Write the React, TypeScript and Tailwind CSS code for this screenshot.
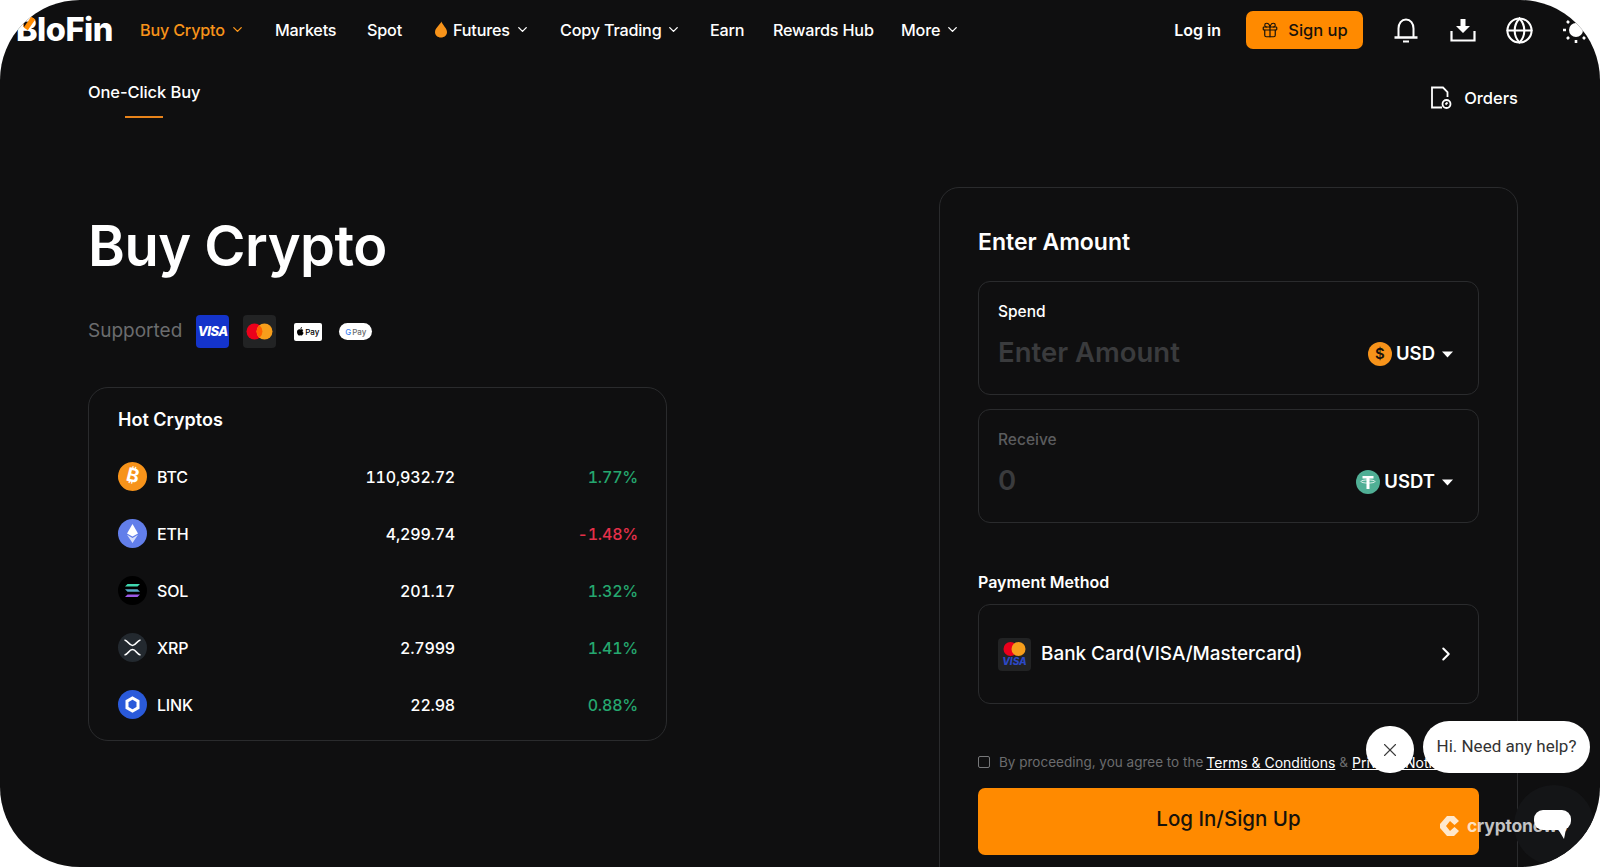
import { ChevronDown, ChevronRight, Gift, Globe, X } from 'lucide-react';

const navItems = [
  { label: 'Buy Crypto', caret: true, active: true, width: 'w-[135px]' },
  { label: 'Markets', width: 'w-[92px]' },
  { label: 'Spot', width: 'w-[67px]' },
  { label: 'Futures', caret: true, flame: true, width: 'w-[126px]' },
  { label: 'Copy Trading', caret: true, width: 'w-[150px]' },
  { label: 'Earn', width: 'w-[63px]' },
  { label: 'Rewards Hub', width: 'w-[128px]' },
  { label: 'More', caret: true, width: 'w-[70px]' },
];

const hotCryptos = [
  { symbol: 'BTC', price: '110,932.72', change: '1.77%', up: true },
  { symbol: 'ETH', price: '4,299.74', change: '-1.48%', up: false },
  { symbol: 'SOL', price: '201.17', change: '1.32%', up: true },
  { symbol: 'XRP', price: '2.7999', change: '1.41%', up: true },
  { symbol: 'LINK', price: '22.98', change: '0.88%', up: true },
];

function Flame() {
  return (
    <svg width="14" height="17" viewBox="0 0 14 17" className="mr-[5px]">
      <path d="M7.5 0.5C8 3.5 13 7 13 11C13 14.3 10.3 16.5 7 16.5C3.7 16.5 1 14.3 1 11C1 8 3 6.5 4.5 4.5C5.5 3 7 2 7.5 0.5Z" fill="#f7931a" />
    </svg>
  );
}

function CoinIcon({ symbol }: { symbol: string }) {
  if (symbol === 'BTC') {
    return (
      <div className="flex h-[29px] w-[29px] rotate-[14deg] items-center justify-center rounded-full bg-[#f7931a] text-[19px] font-bold text-white">
        ₿
      </div>
    );
  }
  if (symbol === 'ETH') {
    return (
      <svg width="29" height="29" viewBox="0 0 29 29">
        <circle cx="14.5" cy="14.5" r="14.5" fill="#627eea" />
        <path d="M14.5 5L9 14.5L14.5 17.6L20 14.5Z" fill="#fff" />
        <path d="M9 15.8L14.5 24L20 15.8L14.5 19Z" fill="#fff" fillOpacity="0.75" />
      </svg>
    );
  }
  if (symbol === 'SOL') {
    return (
      <svg width="29" height="29" viewBox="0 0 29 29">
        <circle cx="14.5" cy="14.5" r="14.5" fill="#000" />
        <path d="M9.5 8H22L19.5 10.6H7Z" fill="#3fd8b0" />
        <path d="M7 13.2H19.5L22 15.8H9.5Z" fill="#5aa9c9" />
        <path d="M9.5 18.4H22L19.5 21H7Z" fill="#9b59e6" />
      </svg>
    );
  }
  if (symbol === 'XRP') {
    return (
      <svg width="29" height="29" viewBox="0 0 29 29">
        <circle cx="14.5" cy="14.5" r="14.5" fill="#23292f" />
        <path d="M6.5 7C10 7.5 11 12.5 14.5 12.5C18 12.5 19 7.5 22.5 7M6.5 22C10 21.5 11 16.5 14.5 16.5C18 16.5 19 21.5 22.5 22" stroke="#fff" strokeWidth="1.7" fill="none" />
      </svg>
    );
  }
  return (
    <svg width="29" height="29" viewBox="0 0 29 29">
      <circle cx="14.5" cy="14.5" r="14.5" fill="#2a5ada" />
      <path d="M14.5 8L20 11.2V17.8L14.5 21L9 17.8V11.2Z" fill="none" stroke="#fff" strokeWidth="3" />
    </svg>
  );
}

function Caret() {
  return (
    <svg width="11" height="7" viewBox="0 0 11 7">
      <path d="M0 0.5H11L5.5 6.5Z" fill="#fff" />
    </svg>
  );
}

function AmountBox({ label, value, labelColor, coin, icon }: { label: string; value: string; labelColor: string; coin: string; icon: React.ReactNode }) {
  return (
    <div className="h-[114px] rounded-[12px] border border-[#2a2b2d] px-[19px] pt-[19px]">
      <div className={`text-[15.5px] font-medium leading-[22px] ${labelColor}`}>{label}</div>
      <div className="mt-[11px] flex items-center justify-between pr-[6px]">
        <span className="text-[27.5px] font-semibold leading-[36px] text-[#3a3b3d]">{value}</span>
        <div className="mt-[4px] flex items-center">
          {icon}
          <span className="ml-[4px] text-[18.5px] font-semibold text-white">{coin}</span>
          <span className="ml-[7px]"><Caret /></span>
        </div>
      </div>
    </div>
  );
}

export default function App() {
  return (
    <div className="h-[867px] w-[1600px] overflow-hidden bg-white font-[Inter,sans-serif]">
      <div className="relative h-[867px] w-[1600px] overflow-hidden rounded-[80px] bg-[#0f0f10] text-white">
        {/* Top nav */}
        <header className="flex h-[60px] items-center pl-[16px] pr-[10px]">
          <div className="relative mr-[27px] w-[97px] text-[32.5px] font-extrabold tracking-[-0.5px]">
            BloFin
            <span className="absolute left-[11px] top-[11px] h-[13px] w-[5px] rotate-[35deg] bg-[#ff8a00]" />
          </div>
          <nav className="flex items-center">
            {navItems.map((item) => (
              <div key={item.label} className={`flex items-center text-[16.2px] font-medium tracking-[-0.2px] ${item.width} ${item.active ? 'text-[#f7931a]' : 'text-white'}`}>
                {item.flame && <Flame />}
                <span>{item.label}</span>
                {item.caret && <ChevronDown size={15} strokeWidth={2.2} className="ml-[5px]" />}
              </div>
            ))}
          </nav>
          <div className="ml-auto flex items-center">
            <span className="mr-[25px] text-[16px] font-semibold">Log in</span>
            <button className="mr-[30px] flex h-[38px] w-[117px] items-center justify-center gap-[9px] rounded-[7px] bg-[#ff8a00] text-[16.5px] font-medium text-[#17120b]">
              <Gift size={18} strokeWidth={1.6} />
              Sign up
            </button>
            <svg width="26" height="26" viewBox="0 0 26 26" fill="none" stroke="#fff" strokeWidth="2">
              <path d="M5.5 20V11.5C5.5 6.5 8.5 2.5 13 2.5C17.5 2.5 20.5 6.5 20.5 11.5V20" />
              <path d="M1.5 20.5H24.5" strokeWidth="2.4" />
              <path d="M10 24.5H16" />
            </svg>
            <svg width="26" height="26" viewBox="0 0 26 26" fill="none" className="ml-[31px]">
              <path d="M1.5 14V23.5H24.5V14" stroke="#fff" strokeWidth="2.2" />
              <path d="M10.5 2H15.5V9H20L13 16L6 9H10.5Z" fill="#fff" />
            </svg>
            <Globe size={29} strokeWidth={1.7} className="ml-[29px]" />
            <svg width="28" height="28" viewBox="0 0 28 28" fill="#fff" stroke="#fff" strokeWidth="2.6" className="ml-[28px]">
              <circle cx="14" cy="14" r="7" stroke="none" />
              <path d="M14 1V4M14 24V27M1 14H4M24 14H27M5 5L7 7M21 21L23 23M5 23L7 21M21 7L23 5" />
            </svg>
          </div>
        </header>

        <main className="pl-[88px] pr-[82px]">
          {/* Tab row */}
          <div className="flex items-start justify-between">
            <div className="flex flex-col items-center">
              <div className="mt-[20px] text-[16.5px] font-medium leading-[24px] tracking-[-0.1px]">One-Click Buy</div>
              <div className="mt-[12px] h-[2px] w-[38px] bg-[#e8831a]" />
            </div>
            <div className="mt-[26px] flex items-center gap-[12px]">
              <svg width="22" height="24" viewBox="0 0 22 24" fill="none" stroke="#fff" strokeWidth="1.8">
                <path d="M12 21.5H2V1.5H13L17.5 6V11" />
                <circle cx="16.5" cy="18" r="4" />
                <path d="M15.5 18.5L17.5 16.5" />
              </svg>
              <span className="text-[16.5px] font-medium">Orders</span>
            </div>
          </div>

          <div className="mt-[69px] flex justify-between">
            {/* Left column */}
            <section className="w-[579px]">
              <h1 className="mt-[27px] text-[56px] font-semibold leading-[64px] tracking-[-0.5px]">Buy Crypto</h1>
              <div className="mt-[37px] flex h-[33px] items-center">
                <span className="mr-[14px] text-[19px] text-[#6b6c6e]">Supported</span>
                <div className="mr-[14px] flex h-[33px] w-[33px] items-center justify-center rounded-[4px] bg-[#1434cb] text-[13px] font-extrabold italic tracking-[-0.5px]">VISA</div>
                <div className="mr-[18px] flex h-[33px] w-[33px] items-center justify-center rounded-[4px] bg-[#222324]">
                  <svg width="27" height="17" viewBox="0 0 27 17">
                    <circle cx="8.5" cy="8.5" r="8" fill="#eb001b" />
                    <circle cx="18.5" cy="8.5" r="8" fill="#f79e1b" />
                    <path d="M13.5 2.3A8 8 0 0 1 13.5 14.7A8 8 0 0 1 13.5 2.3Z" fill="#ff5f00" />
                  </svg>
                </div>
                <div className="mr-[17px] flex h-[18px] w-[28px] items-center justify-center rounded-[2px] bg-white text-[8px] font-medium text-black">
                  <svg width="7" height="9" viewBox="0 0 7 9" className="mr-[1px]">
                    <path d="M3.5 2.5C4.2 2.1 5.4 1.9 6.3 3C5.2 3.7 5.4 5.3 6.6 5.8C6.2 7 5.4 8.5 4.5 8.5C4 8.5 3.8 8.2 3.3 8.2C2.8 8.2 2.5 8.5 2 8.5C1 8.5 0 6.5 0 5C0 3 1.8 1.8 3.5 2.5ZM3.4 2C3.3 1 4.1 0.1 5 0C5.1 1 4.3 2 3.4 2Z" fill="#000" />
                  </svg>
                  Pay
                </div>
                <div className="flex h-[17px] w-[33px] items-center justify-center rounded-full bg-white text-[8px] font-medium text-[#6b6c6e]">
                  <span className="mr-[1px] text-[#4285f4]">G</span>Pay
                </div>
              </div>

              <div className="mt-[39px] h-[354px] rounded-[20px] border border-[#2a2b2d] pl-[29px] pr-[28px] pt-[20px]">
                <div className="text-[18px] font-semibold leading-[24px]">Hot Cryptos</div>
                <div className="mt-[16px]">
                  {hotCryptos.map((coin) => (
                    <div key={coin.symbol} className="flex h-[57px] items-center text-[16px] font-medium tracking-[-0.2px] tabular-nums">
                      <CoinIcon symbol={coin.symbol} />
                      <span className="ml-[10px] w-[80px]">{coin.symbol}</span>
                      <span className="w-[218px] text-right">{coin.price}</span>
                      <span className={`flex-1 text-right ${coin.up ? 'text-[#25a76f]' : 'text-[#e5304a]'}`}>{coin.change}</span>
                    </div>
                  ))}
                </div>
              </div>
            </section>

            {/* Right card */}
            <section className="h-[720px] w-[579px] rounded-[20px] border border-[#2a2b2d] px-[38px] pt-[36px]">
              <h2 className="text-[23px] font-semibold leading-[36px]">Enter Amount</h2>
              <div className="mt-[21px] flex flex-col gap-[14px]">
                <AmountBox
                  label="Spend"
                  labelColor="text-white"
                  value="Enter Amount"
                  coin="USD"
                  icon={
                    <div className="flex h-[24px] w-[24px] items-center justify-center rounded-full bg-[#f7931a] text-[15px] font-semibold text-[#17120b]">$</div>
                  }
                />
                <AmountBox
                  label="Receive"
                  labelColor="text-[#5b5c5e]"
                  value="0"
                  coin="USDT"
                  icon={
                    <svg width="24" height="24" viewBox="0 0 24 24">
                      <circle cx="12" cy="12" r="12" fill="#50af95" />
                      <path d="M6.5 6H17.5V8.5H13.5V19H10.5V8.5H6.5Z" fill="#fff" />
                      <ellipse cx="12" cy="11.5" rx="7" ry="1.6" fill="none" stroke="#fff" strokeWidth="0.8" />
                    </svg>
                  }
                />
              </div>

              <div className="mt-[47px] text-[16px] font-semibold leading-[24px]">Payment Method</div>
              <div className="mt-[10px] flex h-[100px] items-center rounded-[12px] border border-[#2a2b2d] pl-[19px] pr-[21px]">
                <div className="flex h-[33px] w-[33px] flex-col items-center justify-center rounded-[4px] bg-[#222324]">
                  <svg width="23" height="14" viewBox="0 0 23 14">
                    <circle cx="7.5" cy="7" r="7" fill="#eb001b" />
                    <circle cx="15.5" cy="7" r="7" fill="#f79e1b" />
                  </svg>
                  <span className="text-[10px] font-extrabold italic leading-[11px] text-[#2c49c7]">VISA</span>
                </div>
                <span className="ml-[10px] text-[18.9px] font-medium">Bank Card(VISA/Mastercard)</span>
                <ChevronRight size={22} strokeWidth={2.2} className="ml-auto" />
              </div>

              <div className="mt-[50px] flex h-[16px] items-center text-[13.5px] text-[#6b6c6e]">
                <span className="h-[12px] w-[12px] rounded-[2px] border border-[#77787a]" />
                <span className="ml-[9px]">By proceeding, you agree to the </span>
                <span className="ml-[3px] text-[14px] text-white underline">Terms &amp; Conditions</span>
                <span className="mx-[4px]">&amp;</span>
                <span className="text-[14px] text-white underline">Privacy Notice</span>
              </div>
              <button className="mt-[18px] h-[67px] w-full rounded-[7px] bg-[#ff8a00] pb-[4px] text-[20.5px] font-medium text-[#17120b]">Log In/Sign Up</button>
            </section>
          </div>
        </main>

        {/* Chat widget + watermark */}
        <div className="absolute left-[1514px] top-[785px] h-[80px] w-[80px] rounded-full bg-[#141517]" />
        <div className="absolute left-[1440px] top-[813px] flex items-center gap-[8px] text-[17.5px] font-bold tracking-[-0.2px] text-white/75">
          <svg width="19" height="20" viewBox="0 0 19 20">
            <path d="M7 0H14L19 5L14.5 9L10 5L6 10L10 15L14.5 11L19 15L14 20H7L0 12V8Z" fill="#fff" fillOpacity="0.8" />
          </svg>
          cryptonews
        </div>
        <div className="absolute left-[1534px] top-[810px] h-[20px] w-[37px] rounded-[9px] bg-white" />
        <svg width="8" height="10" viewBox="0 0 8 10" className="absolute left-[1558px] top-[829px]">
          <path d="M0 0H8L6 10Z" fill="#fff" />
        </svg>
        <div className="absolute left-[1366px] top-[726px] flex h-[47px] w-[48px] items-center justify-center rounded-full bg-white text-[#3b3b3b]">
          <X size={22} strokeWidth={1.2} />
        </div>
        <div className="absolute left-[1423px] top-[721px] flex h-[52px] w-[167px] items-center justify-center rounded-[26px] bg-white font-[Roboto,sans-serif] text-[17px] text-[#333]">
          Hi. Need any help?
        </div>
      </div>
    </div>
  );
}
